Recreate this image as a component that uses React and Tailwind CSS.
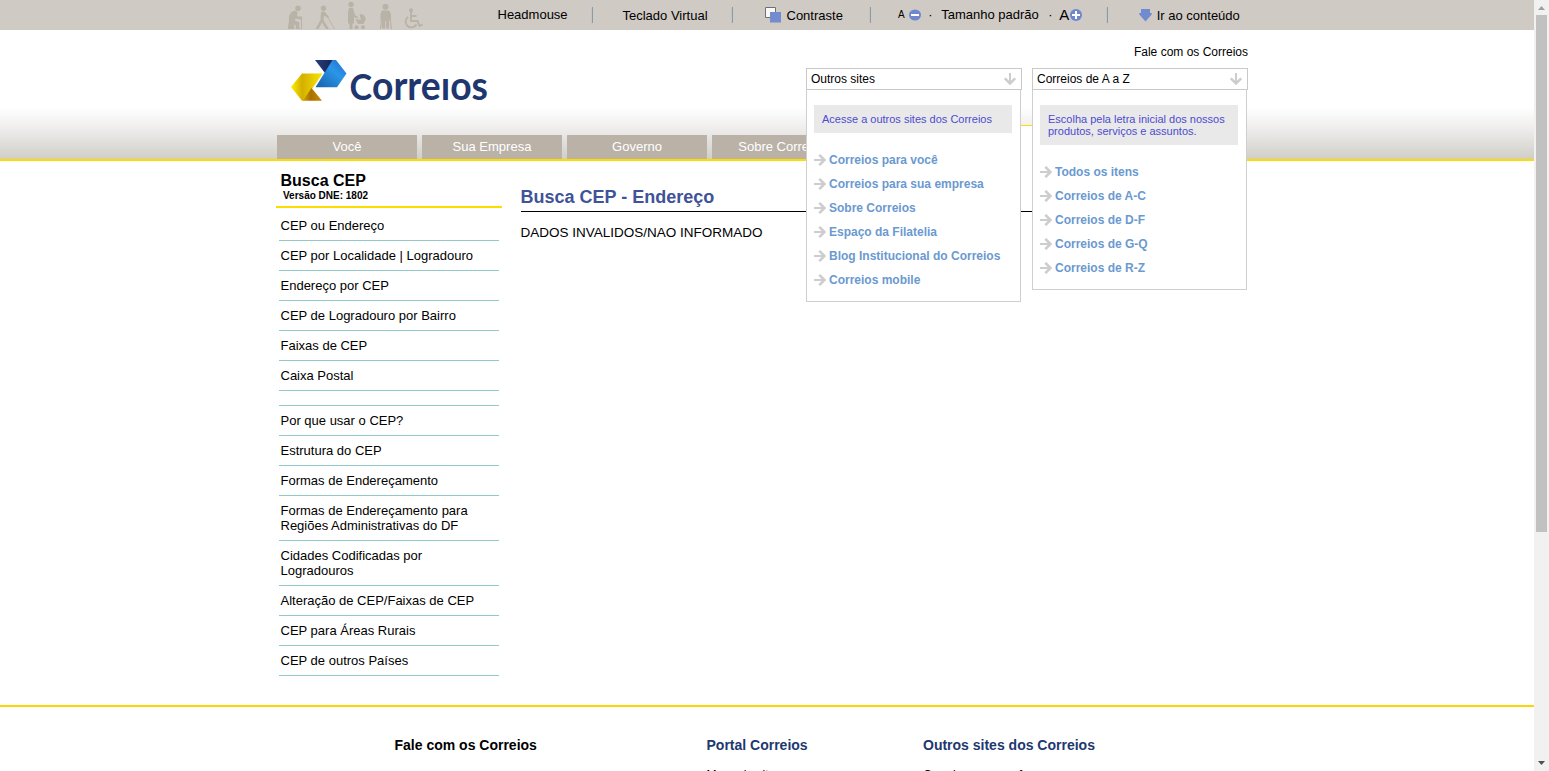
import React from "react";

function Arrow({ down }) {
  return (
    <svg className={down ? "mr-[5px] h-3 w-3 rotate-90" : "mr-[3px] h-3 w-3"} viewBox="0 0 12 12" fill="none" stroke="#cdcdcd" strokeWidth="2">
      <path d="M0 6H11" />
      <path d="M5.300 .8L10.500 6L5.300 11.200" strokeWidth="2.500" />
    </svg>
  );
}

function People() {
  return (
    <svg className="ml-[11px] h-[30px] w-[137px] shrink-0" viewBox="0 0 137 30" fill="#b9b2a7" stroke="#b9b2a7" strokeWidth="0">
      <circle cx="11" cy="8.200" r="2.800" />
      <path d="M7.500 10.500L10.500 12L10 16L14 17.500V19.500L8.500 18.500L8 20.500L12.500 22.500L12 27L13.500 29H9L8.500 25L7 24.500L7.500 29H.7L2 21Q.5 13 7.500 10.500Z" />
      <path d="M12 17H14.500V29" fill="none" strokeWidth="1.100" />
      <circle cx="36.500" cy="8.300" r="2.700" />
      <path d="M34 12L37.500 11.500L42 17L41 18L37 15.500L36.500 20L42 29H39L35 22.500L31.500 29H28.500L33.500 20Z" />
      <path d="M40.500 17L47.500 29" fill="none" strokeWidth="0.900" />
      <circle cx="64" cy="4.500" r="2.700" />
      <path d="M62 8H66L68 15L71 17L70.500 18.500L67 17V23L65.500 24V29H62.500V24L61 23V12Z" />
      <path d="M72.500 14Q79 14 78.500 20L76.500 24H71L68.500 19L74 20Z" />
      <circle cx="69.500" cy="27.200" r="2" /><circle cx="76" cy="27.200" r="2" />
      <circle cx="98.500" cy="6.700" r="3" />
      <path d="M95 10.500H102L104 14V20H102V28.500H99.200V21H98.200V28.500H95V20H93.500V14Z" />
      <path d="M94.500 19L93.500 29M103 19L104.500 29" fill="none" strokeWidth="1.200" />
      <circle cx="124" cy="10.300" r="2" />
      <path d="M124 12V21H130.500L132.500 26L135.500 24.500M124 16H129.500M121 17A5.800 5.800 0 1 0 129.500 24.500" fill="none" strokeWidth="1.900" />
    </svg>
  );
}

function Logo() {
  return (
    <svg className="h-[46px] w-[200px]" viewBox="0 0 200 46" aria-label="Correios">
      <defs>
        <linearGradient id="gold" x1="0" x2="1"><stop stopColor="#fff000" /><stop offset=".35" stopColor="#d4af00" /><stop offset="1" stopColor="#f8e600" /></linearGradient>
        <linearGradient id="bronze" x1="0" x2="1"><stop stopColor="#d2a000" /><stop offset=".4" stopColor="#aa7000" /><stop offset="1" stopColor="#c68b00" /></linearGradient>
        <linearGradient id="blue" x1="0" y1="1" x2="1" y2="0"><stop stopColor="#1860a8" /><stop offset=".6" stopColor="#2a96e8" /><stop offset="1" stopColor="#2766cb" /></linearGradient>
        <linearGradient id="navy" x1="0" x2="1"><stop stopColor="#243f79" /><stop offset="1" stopColor="#152052" /></linearGradient>
      </defs>
      <path d="M11 15.500H31.500L13 42.700H11L0 29Z" fill="url(#gold)" />
      <path d="M20.500 30L31 42.700H12Z" fill="url(#bronze)" />
      <path d="M24 2H44L34 15Z" fill="url(#navy)" />
      <path d="M41.500 2H45L55.500 15.500L46 29.300H24.500Z" fill="url(#blue)" />
      <text x="58.500" y="42.200" textLength="138.500" lengthAdjust="spacingAndGlyphs" fontFamily="Lato, sans-serif" fontSize="40.500" fontWeight="700" fill="#20366f">
        <tspan fontSize="37">C</tspan>orreıos
      </text>
    </svg>
  );
}

function Divider({ className }) {
  return <i className={"h-4 w-px bg-[#8e99a2] shadow-[-1px_0_#c1c5c7] " + className} />;
}

function Accessibility() {
  return (
    <div className="h-[30px] bg-[#d0cac4]">
      <div className="mx-auto flex h-full w-[983px] items-center text-[13px]">
        <People />
        <span className="ml-[74px] w-[94px] shrink-0">Headmouse</span>
        <Divider className="shrink-0" />
        <span className="ml-[30px] w-[109px] shrink-0 pt-px">Teclado Virtual</span>
        <Divider className="shrink-0" />
        <svg className="mr-[6px] ml-[32px] h-4 w-4 shrink-0" viewBox="0 0 16 16"><path d="M.5.5H10.500V10.500H.5Z" fill="#f8f8f8" stroke="#707070" /><path d="M5 5H16V15.500H5Z" fill="#738ccf" /></svg>
        <span className="w-[83px] shrink-0 pt-px">Contraste</span>
        <Divider className="shrink-0" />
        <span className="mr-1 ml-[27.5px] pb-px text-[10px]">A</span>
        <svg className="h-3 w-3" viewBox="0 0 12 12"><ellipse cx="6" cy="6" rx="6" ry="5.600" fill="#6f87cd" /><path d="M2 6H10" stroke="white" strokeWidth="2" /></svg>
        <span className="ml-[7.500px] w-[13px]">·</span>
        <span className="w-[107px] shrink-0">Tamanho padrão</span>
        <span className="w-[11px]">·</span>
        <span className="text-[15px]">A</span>
        <svg className="ml-[.5px] h-3 w-3" viewBox="0 0 12 12"><circle cx="6" cy="6" r="6" fill="#6f87cd" /><path d="M2 6H10M6 2V10" stroke="white" strokeWidth="2" /></svg>
        <Divider className="ml-[25px] shrink-0" />
        <svg className="mr-[5px] ml-[31px] h-[14px] w-[13px] shrink-0" viewBox="0 0 13 14"><path d="M2 1H11V5H12.700V6.500L6.500 13.500L.3 6.500V5H2Z" fill="#718bd1" /></svg>
        <span className="shrink-0 pt-px">Ir ao conteúdo</span>
      </div>
    </div>
  );
}

function Dropdown({ label, note, items }) {
  return (
    <div className="w-[216px]">
      <div className="flex h-[22px] items-center justify-between border border-[#c9c9c9] bg-white pl-1 text-[12px]"><span>{label}</span><Arrow down /></div>
      <div className="w-[215px] border border-t-0 border-[#cfcfcf] bg-white px-[7px] pt-[15px] pb-[9px]">
        <p className="mb-[15px] w-[198px] bg-[#e9e9e9] p-2 text-[11px] leading-[12px] text-[#4d4bd0]">{note}</p>
        {items.map((item) => <a key={item} className="flex h-6 items-center text-[12px] font-bold text-[#6b99d0]"><Arrow /><span>{item}</span></a>)}
      </div>
    </div>
  );
}

const services = ["CEP ou Endereço", "CEP por Localidade | Logradouro", "Endereço por CEP", "CEP de Logradouro por Bairro", "Faixas de CEP", "Caixa Postal"];
const information = ["Por que usar o CEP?", "Estrutura do CEP", "Formas de Endereçamento", "Formas de Endereçamento para Regiões Administrativas do DF", "Cidades Codificadas por Logradouros", "Alteração de CEP/Faixas de CEP", "CEP para Áreas Rurais", "CEP de outros Países"];

function Header() {
  return (
    <header className="h-[131px] border-b-2 border-[#fddc00] bg-[linear-gradient(to_bottom,#fff_0,#fff_77px,#efeeed_98px,#d0cec8_129px)]">
      <div className="relative mx-auto h-[129px] w-[986px]">
        <div className="h-[105px] pt-[28px] pl-[17px]"><Logo /></div>
        <nav className="flex gap-[5px] pl-[3px]">
          {["Você", "Sua Empresa", "Governo", "Sobre Correios"].map((x) => <a key={x} className="flex h-6 w-[140px] items-center justify-center bg-[#bab2a7] text-[13px] text-white">{x}</a>)}
        </nav>
        <div className="absolute top-[95px] left-[747px] h-[36px] w-[11px] border-t border-[#fddc00] bg-white" />
        <a className="absolute top-[14px] right-[12px] text-[12px] leading-4">Fale com os Correios</a>
        <div className="absolute top-[38px] left-[532px] z-10 flex items-start gap-[10px]">
          <Dropdown label="Outros sites" note="Acesse a outros sites dos Correios" items={["Correios para você", "Correios para sua empresa", "Sobre Correios", "Espaço da Filatelia", "Blog Institucional do Correios", "Correios mobile"]} />
          <Dropdown label="Correios de A a Z" note="Escolha pela letra inicial dos nossos produtos, serviços e assuntos." items={["Todos os itens", "Correios de A-C", "Correios de D-F", "Correios de G-Q", "Correios de R-Z"]} />
        </div>
      </div>
    </header>
  );
}

export default function App() {
  return (
    <div className="flex h-[771px] overflow-hidden bg-white font-['Liberation_Sans',sans-serif] text-black">
      <div className="w-[1534px] shrink-0">
        <Accessibility />
        <Header />
        <main className="mx-auto flex h-[544px] w-[982px]">
          <aside className="w-[226px]">
            <div className="h-[47px] border-b-2 border-[#fddc00] pt-[10px] pl-[4.5px]">
              <h2 className="text-[16px] leading-[19px] font-bold">Busca CEP</h2>
              <p className="pl-[2.5px] text-[10px] leading-[11px] font-bold">Versão DNE: 1802</p>
            </div>
            <div className="ml-[3px] w-[220px] pt-[3px] text-[13px] leading-[15px]">
              {services.map((x) => <a key={x} className="flex h-[30px] items-end border-b border-[#91cac8] pb-[7px] pl-[1.5px]">{x}</a>)}
              <div className="h-[15px] border-b border-[#91cac8]" />
              {information.map((x) => <a key={x} className="block border-b border-[#91cac8] pt-[7px] pr-5 pb-[7px] pl-[1.5px]">{x}</a>)}
            </div>
          </aside>
          <section className="ml-[18.5px] w-[720px]">
            <h1 className="mt-[26px] h-[25px] border-b border-black text-[18px] leading-[21px] font-bold text-[#405398]">Busca CEP - Endereço</h1>
            <p className="pt-[13px] text-[13.5px] leading-[16px]">DADOS INVALIDOS/NAO INFORMADO</p>
          </section>
        </main>
        <footer className="border-t-2 border-[#ffd400] pt-[30px]">
          <div className="ml-[394.5px] grid grid-cols-[312px_216.5px_300px] text-[14px] leading-4 font-bold text-[#21376f]">
            <h3 className="text-black">Fale com os Correios</h3>
            <div><h3>Portal Correios</h3><p className="mt-[14px] text-[12px] leading-4 font-normal text-black">Mapa do site</p></div>
            <div><h3>Outros sites dos Correios</h3><p className="mt-[14px] text-[12px] leading-4 font-normal text-black">Correios para você</p></div>
          </div>
        </footer>
      </div>
      <div className="flex w-[15px] flex-col items-center bg-[#f1f1f1]">
        <svg className="h-[15px] w-[15px]" viewBox="0 0 15 15" fill="#a0a0a0"><path d="M4 10L7.500 6L11 10Z" /></svg>
        <div className="h-[517px] w-[11px] bg-[#c1c1c1]" />
        <svg className="mt-auto h-[15px] w-[15px]" viewBox="0 0 15 15" fill="#505050"><path d="M4 5H11L7.500 9Z" /></svg>
      </div>
    </div>
  );
}
